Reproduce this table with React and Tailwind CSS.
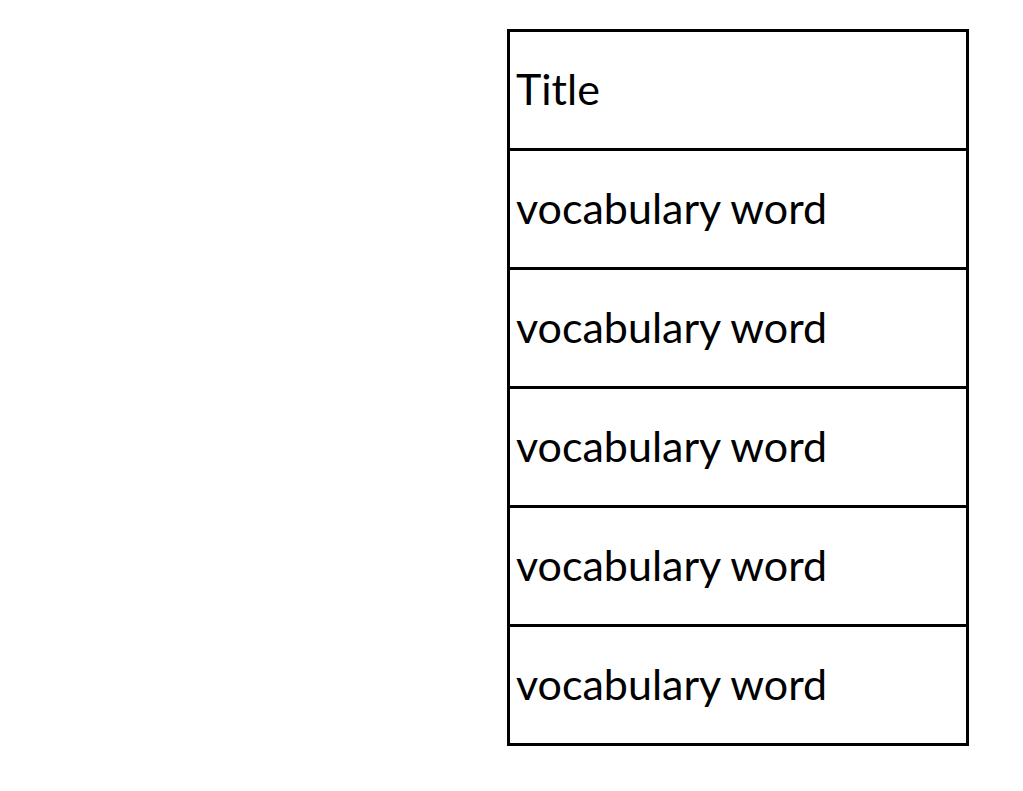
const ROWS = ['Title', 'vocabulary word', 'vocabulary word', 'vocabulary word', 'vocabulary word', 'vocabulary word'];

export default function App() {
  return (
    <div className="min-h-[791px] w-[1023px] bg-white pl-[507px] pt-[29px] font-['Lato',sans-serif] text-black">
      <div className="w-[462px] border-[3px] border-black">
        {ROWS.map((label, i) => (
          <div
            key={i}
            className={`flex items-center pb-[4px] pl-[6px] text-[43px] leading-none ${i > 0 ? 'h-[119px] border-t-[3px] border-black' : 'h-[116px]'}`}
          >
            {label}
          </div>
        ))}
      </div>
    </div>
  );
}
